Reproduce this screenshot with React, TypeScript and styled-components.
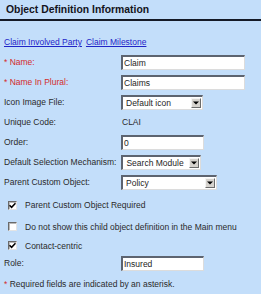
import styled, { createGlobalStyle } from "styled-components";

const GlobalStyle = createGlobalStyle`
  html, body {
    margin: 0;
    padding: 0;
    background: #c3defa;
  }
  body {
    font-family: "Liberation Sans", Arial, sans-serif;
    color: #2a2a2a;
  }
`;

// Page wrapper
const Panel = styled.div`
  width: 261px;
  height: 294px;
  background: #c3defa;
  display: flex;
  flex-direction: column;
  overflow: hidden;
`;

const Header = styled.h1`
  margin: 0;
  height: 19px;
  line-height: 19px;
  padding-left: 6px;
  font-size: 10.4px;
  font-weight: bold;
  color: #14141c;
  border-bottom: 2px solid #151a26;
`;

const LinkBar = styled.div`
  display: flex;
  gap: 4px;
  margin: 15px 0 4px 4px;
  height: 12px;
  line-height: 12px;
  font-size: 8.5px;
`;

const Link = styled.a`
  color: #1f24c8;
  text-decoration: underline;
  cursor: pointer;
`;

const Row = styled.div<{ $h?: number }>`
  display: flex;
  align-items: center;
  height: ${(p) => p.$h ?? 20}px;
  padding-left: 4px;
  font-size: 8.5px;
`;

const Label = styled.span<{ $required?: boolean }>`
  flex: 0 0 auto;
  min-width: 117px;
  box-sizing: border-box;
  padding-right: 5px;
  white-space: nowrap;
  color: ${(p) => (p.$required ? "#d42b2b" : "#2a2a2a")};
`;

const Value = styled.span`
  color: #2a2a2a;
  padding-left: 1px;
`;

const TextBox = styled.div<{ $w: number }>`
  width: ${(p) => p.$w}px;
  height: 15px;
  box-sizing: border-box;
  background: #fff;
  border-style: solid;
  border-width: 2px 1px 1px 2px;
  border-color: #5d6470 #dcdcdc #dcdcdc #5d6470;
  padding-left: 1px;
  line-height: 12px;
  color: #1e1e1e;
  white-space: nowrap;
  overflow: hidden;
`;

const Select = styled.div<{ $w: number }>`
  min-width: ${(p) => p.$w}px;
  height: 15px;
  box-sizing: border-box;
  background: #fff;
  border-style: solid;
  border-width: 2px 1px 1px 2px;
  border-color: #5d6470 #dcdcdc #dcdcdc #5d6470;
  display: flex;
  align-items: center;
  justify-content: space-between;
  gap: 5px;
  padding: 0 1px 0 3px;
  color: #1e1e1e;
  white-space: nowrap;
`;

const ArrowButton = styled.span`
  flex: 0 0 auto;
  width: 10px;
  height: 10px;
  box-sizing: border-box;
  background: #d6d3ce;
  border-style: solid;
  border-width: 1px;
  border-color: #f4f4f4 #6c6c6c #6c6c6c #f4f4f4;
  display: flex;
  align-items: center;
  justify-content: center;
`;

const CheckRow = styled(Row)`
  padding-left: 8px;
  gap: 8px;
`;

const Box = styled.span`
  width: 9px;
  height: 9px;
  box-sizing: border-box;
  background: #fff;
  border-style: solid;
  border-width: 1px;
  border-color: #6a6a6a #e4e4e4 #e4e4e4 #6a6a6a;
  box-shadow: inset 1px 1px 0 #b8b8b8;
  display: flex;
  align-items: center;
  justify-content: center;
`;

const Footnote = styled.div`
  margin-top: 7px;
  padding-left: 4px;
  font-size: 8.5px;
  color: #2a2a2a;
`;

const Star = styled.span`
  color: #d42b2b;
`;

const Arrow = () => (
  <ArrowButton>
    <svg width="6" height="4" viewBox="0 0 6 4">
      <path d="M0 0.5h6L3 3.5z" fill="#000" />
    </svg>
  </ArrowButton>
);

const Check = ({ checked }: { checked?: boolean }) => (
  <Box>
    {checked && (
      <svg width="7" height="7" viewBox="0 0 7 7">
        <path d="M0.5 3.2L2.6 5.3L6.5 1.2" stroke="#000" strokeWidth="1.6" fill="none" />
      </svg>
    )}
  </Box>
);

const App = () => {
  return (
    <Panel>
      <GlobalStyle />
      <Header>Object Definition Information</Header>
      <LinkBar>
        <Link>Claim Involved Party</Link>
        <Link>Claim Milestone</Link>
      </LinkBar>

      <Row>
        <Label $required>* Name:</Label>
        <TextBox $w={124}>Claim</TextBox>
      </Row>
      <Row>
        <Label $required>* Name In Plural:</Label>
        <TextBox $w={124}>Claims</TextBox>
      </Row>
      <Row>
        <Label>Icon Image File:</Label>
        <Select $w={82}>
          Default icon
          <Arrow />
        </Select>
      </Row>
      <Row>
        <Label>Unique Code:</Label>
        <Value>CLAI</Value>
      </Row>
      <Row>
        <Label>Order:</Label>
        <TextBox $w={83}>0</TextBox>
      </Row>
      <Row>
        <Label>Default Selection Mechanism:</Label>
        <Select $w={72}>
          Search Module
          <Arrow />
        </Select>
      </Row>
      <Row>
        <Label>Parent Custom Object:</Label>
        <Select $w={96}>
          Policy
          <Arrow />
        </Select>
      </Row>

      <CheckRow $h={22} style={{ marginTop: 2 }}>
        <Check checked />
        Parent Custom Object Required
      </CheckRow>
      <CheckRow $h={21}>
        <Check />
        Do not show this child object definition in the Main menu
      </CheckRow>
      <CheckRow $h={17}>
        <Check checked />
        Contact-centric
      </CheckRow>
      <Row $h={18}>
        <Label>Role:</Label>
        <TextBox $w={83}>Insured</TextBox>
      </Row>

      <Footnote>
        <Star>*</Star> Required fields are indicated by an asterisk.
      </Footnote>
    </Panel>
  );
};

export default App;
